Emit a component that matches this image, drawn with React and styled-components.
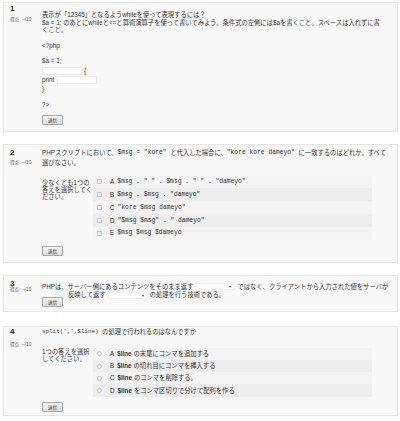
import React from 'react';
import styled, { createGlobalStyle } from 'styled-components';

const GlobalStyle = createGlobalStyle`
  body {
    margin: 0;
    background: #fff;
    font-family: "Liberation Sans", "Noto Sans CJK JP", sans-serif;
    color: #333;
  }
`;

const Page = styled.div`
  padding: 2px 2px 4px 3px;
  display: flex;
  flex-direction: column;
  gap: ${p => p.$gap || 12}px;
`;

const Card = styled.div`
  display: flex;
  background: #f8f8f8;
  border: 1px solid #e6e6e6;
  padding: 0 20px ${p => p.$bottom}px 6px;
  margin-top: ${p => p.$mt || 0}px;
`;

const Info = styled.div`
  width: 32px;
  flex: none;
  padding-top: ${p => p.$top}px;
`;

const Num = styled.div`
  font-size: 8px;
  line-height: 9px;
  font-weight: bold;
  color: #222;
`;

const Score = styled.div`
  font-size: 4.6px;
  line-height: 6px;
  color: #555;
  white-space: nowrap;
  margin-top: ${p => p.$mt}px;
`;

const Content = styled.div`
  flex: 1;
  padding-top: ${p => p.$top}px;
  font-size: 6.3px;
  line-height: ${p => p.$lh || 7.5}px;
`;

const Line = styled.div`
  white-space: nowrap;
  margin-top: ${p => p.$mt || 0}px;
  line-height: ${p => p.$lh || 7.5}px;
  display: flex;
  align-items: ${p => p.$align || 'center'};
  gap: ${p => p.$gap || 0}px;
`;

const Code = styled.span`
  font-family: "Liberation Mono", "Noto Sans CJK JP", monospace;
  font-size: ${p => p.$size || 6.3}px;
  white-space: pre;
`;

const Blank = styled.input`
  box-sizing: border-box;
  width: 40px;
  height: 8px;
  border: 1px solid #ececec;
  background: #fff;
  padding: 0;
  margin: 0 ${p => p.$mr || 0}px 0 ${p => p.$ml || 0}px;
`;

const Select = styled.span`
  position: relative;
  display: inline-block;
  box-sizing: border-box;
  width: 40px;
  height: 7px;
  background: #fff;
  border: 1px solid #f0f0f0;
  margin: 0 2px;
  &::after {
    content: "";
    position: absolute;
    right: 3px;
    top: 2px;
    border-left: 1.5px solid transparent;
    border-right: 1.5px solid transparent;
    border-top: 2px solid #444;
  }
`;

const Button = styled.button`
  box-sizing: border-box;
  width: 21px;
  height: 10px;
  padding: 0;
  margin-top: ${p => p.$mt || 0}px;
  border: 1px solid #a8a8a8;
  border-radius: 1px;
  background: linear-gradient(#f6f6f6, #dcdcdc);
  font-family: "Noto Sans CJK JP", sans-serif;
  font-size: 4.6px;
  line-height: 8px;
  color: #333;
  flex: none;
`;

const Answer = styled.div`
  display: flex;
  margin-top: ${p => p.$mt}px;
`;

const Prompt = styled.div`
  width: 51px;
  flex: none;
  white-space: nowrap;
  line-height: 7px;
  padding-top: ${p => p.$top}px;
`;

const Options = styled.div`
  width: 279px;
  display: flex;
  flex-direction: column;
`;

const Option = styled.div`
  display: flex;
  align-items: center;
  height: ${p => p.$h}px;
  padding-left: 4px;
  background: ${p => (p.$odd ? '#ededed' : '#f3f3f3')};
  white-space: nowrap;
`;

const Check = styled.span`
  box-sizing: border-box;
  width: 5px;
  height: 5px;
  border: 1px solid #c8c8c8;
  background: #f4f4f4;
  border-radius: ${p => (p.$round ? '50%' : '0')};
  margin-right: 8px;
  flex: none;
`;

const Letter = styled.span`
  margin-right: 3px;
`;

const Var = styled.span`
  font-weight: bold;
  margin-right: 2px;
`;

const q2Options = [
  ['A', '$msg . " " . $msg . " " . "dameyo"'],
  ['B', '$msg . $msg . "dameyo"'],
  ['C', '"kore $msg dameyo"'],
  ['D', '"$msg $msg" . " dameyo"'],
  ['E', '$msg $msg $dameyo'],
];

const q4Options = [
  ['A', 'の末尾にコンマを追加する'],
  ['B', 'の切れ目にコンマを挿入する'],
  ['C', 'のコンマを削除する。'],
  ['D', 'をコンマ区切りで分けて配列を作る'],
];

export default function App() {
  return (
    <>
      <GlobalStyle />
      <Page>
        <Card $bottom={6}>
          <Info $top={1}>
            <Num>1</Num>
            <Score $mt={4}>得点: --/10</Score>
          </Info>
          <Content $top={8}>
            <Line>表示が「12345」となるようwhileを使って表現するには？</Line>
            <Line>$a = 1; のあとにwhileと&lt;=と算術演算子を使って書いてみよう。条件式の左側には$aを書くこと。スペースは入れずに書</Line>
            <Line>くこと。</Line>
            <Line $mt={8.5}>&lt;?php</Line>
            <Line $mt={7.5}>$a = 1;</Line>
            <Line $mt={1.8} $lh={9}>
              <Blank $mr={2} />{'{'}
            </Line>
            <Line $lh={9}>
              print<Blank $ml={3} />
            </Line>
            <Line $mt={0.8}>{'}'}</Line>
            <Line $mt={8.5}>?&gt;</Line>
            <Button $mt={6}>送信</Button>
          </Content>
        </Card>

        <Card $bottom={6}>
          <Info $top={3}>
            <Num>2</Num>
            <Score $mt={3}>得点: --/10</Score>
          </Info>
          <Content $top={3}>
            <Line $lh={10}>
              PHPスクリプトにおいて、<Code>$msg = "kore" </Code>と代入した場合に、<Code>"kore kore dameyo" </Code>に一致するのはどれか。すべて
            </Line>
            <Line $lh={9}>選びなさい。</Line>
            <Answer $mt={9}>
              <Prompt $top={3}>
                少なくとも1つの<br />答えを選択してく<br />ださい。
              </Prompt>
              <Options>
                {q2Options.map(([letter, code], i) => (
                  <Option key={letter} $h={12.8} $odd={i % 2 === 1}>
                    <Check />
                    <Letter>{letter}</Letter>
                    <Code>{code}</Code>
                  </Option>
                ))}
              </Options>
            </Answer>
            <Button $mt={6}>送信</Button>
          </Content>
        </Card>

        <Card $bottom={4}>
          <Info $top={3.5}>
            <Num>3</Num>
            <Score $mt={-1}>得点: --/10</Score>
          </Info>
          <Content $top={7} $lh={8}>
            <Line $lh={8}>
              PHPは、サーバー側にあるコンテンツをそのまま返す<Select />ではなく、クライアントから入力された値をサーバが
            </Line>
            <Line $lh={8} $align="flex-start">
              <Button $mt={6}>送信</Button>
              <span style={{ marginLeft: 5 }}>反映して返す</span>
              <Select style={{ marginTop: 1 }} />
              <span>の処理を行う技術である。</span>
            </Line>
          </Content>
        </Card>

        <Card $bottom={3} $mt={2}>
          <Info $top={0.5}>
            <Num>4</Num>
            <Score $mt={5.5}>得点: --/10</Score>
          </Info>
          <Content $top={1} $lh={8}>
            <Line $lh={8}>
              <Code $size={5.9}>split(',',$line) </Code>の処理で行われるのはなんですか
            </Line>
            <Answer $mt={12}>
              <Prompt $top={0.5}>
                1つの答えを選択<br />してください。
              </Prompt>
              <Options>
                {q4Options.map(([letter, text], i) => (
                  <Option key={letter} $h={12.3} $odd={i % 2 === 1}>
                    <Check $round />
                    <Letter>{letter}</Letter>
                    <Var>$line</Var>
                    {text}
                  </Option>
                ))}
              </Options>
            </Answer>
            <Button $mt={5}>送信</Button>
          </Content>
        </Card>
      </Page>
    </>
  );
}
